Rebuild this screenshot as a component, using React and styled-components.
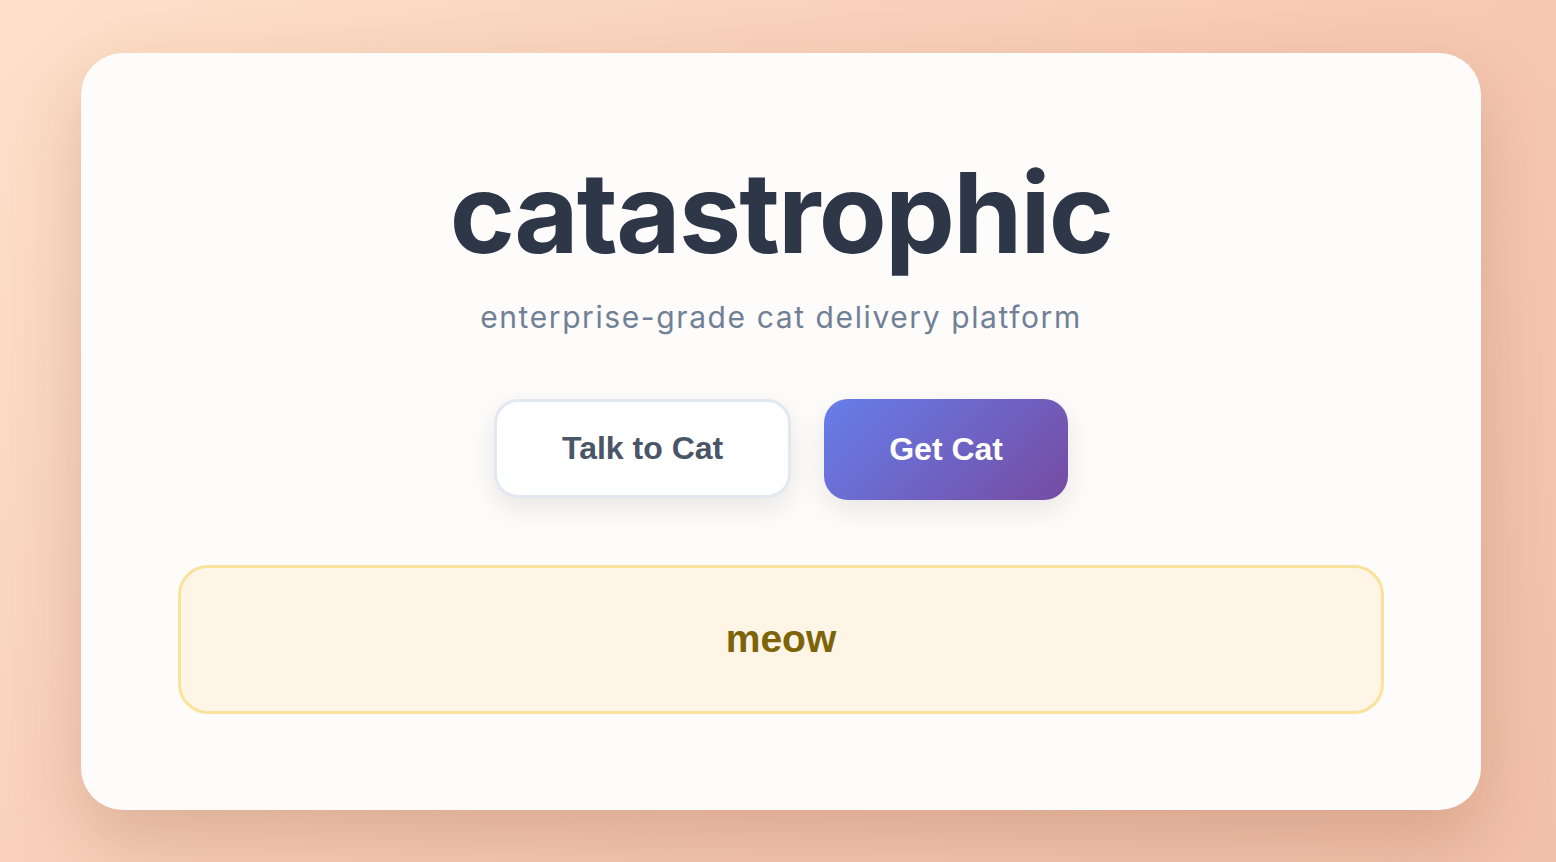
import React from 'react'
import styled, { createGlobalStyle } from 'styled-components'

const GlobalStyle = createGlobalStyle`
  html, body {
    margin: 0;
    height: 100%;
  }
  body {
    background: linear-gradient(135deg, #fee0ca 0%, #f7cab3 55%, #f3c0a9 100%);
    font-family: Inter, "Liberation Sans", sans-serif;
  }
  #root {
    height: 100%;
  }
`

const Page = styled.main`
  box-sizing: border-box;
  height: 100%;
  display: flex;
  align-items: center;
  padding: 0 75px 0 81px;
`

const Card = styled.section`
  box-sizing: border-box;
  width: 100%;
  height: 757px;
  padding: 96px 97px;
  border-radius: 42px;
  background: #fdfcfa;
  box-shadow: 0 30px 70px rgba(120, 60, 30, 0.22);
  display: flex;
  flex-direction: column;
  align-items: center;
`

const Title = styled.h1`
  margin: 8px 0 0;
  font-family: Inter, "Liberation Sans", sans-serif;
  font-weight: 700;
  font-size: 111px;
  line-height: 1;
  letter-spacing: -1.8px;
  color: #2d3748;
`

const Subtitle = styled.p`
  margin: 32px 0 0;
  font-family: Inter, "Liberation Sans", sans-serif;
  font-size: 30px;
  line-height: 35px;
  letter-spacing: 1.6px;
  color: #718096;
`

const Actions = styled.div`
  display: flex;
  align-items: flex-start;
  gap: 33px;
  margin-top: 64px;
`

const Button = styled.button`
  box-sizing: border-box;
  height: ${p => (p.primary ? '101px' : '99px')};
  padding: 0 65px;
  border-radius: 24px;
  font-family: "Liberation Sans", Arial, sans-serif;
  font-weight: 700;
  font-size: 32px;
  cursor: pointer;
  border: ${p => (p.primary ? 'none' : '3px solid #e2e8f0')};
  background: ${p => (p.primary ? 'linear-gradient(135deg, #667eea 0%, #764ba2 100%)' : '#ffffff')};
  color: ${p => (p.primary ? '#ffffff' : '#4a5568')};
  box-shadow: 0 10px 28px rgba(0, 0, 0, 0.09);
`

const Message = styled.div`
  box-sizing: border-box;
  align-self: stretch;
  height: 149px;
  margin-top: 65px;
  border: 3px solid #f9e39a;
  border-radius: 30px;
  background: #fef5e7;
  display: flex;
  align-items: center;
  justify-content: center;
  font-family: "Liberation Sans", Arial, sans-serif;
  font-weight: 700;
  font-size: 39px;
  color: #7d6408;
`

const App = () => (
  <>
    <GlobalStyle />
    <Page>
      <Card>
        <Title>catastrophic</Title>
        <Subtitle>enterprise-grade cat delivery platform</Subtitle>
        <Actions>
          <Button>Talk to Cat</Button>
          <Button primary>Get Cat</Button>
        </Actions>
        <Message>meow</Message>
      </Card>
    </Page>
  </>
)

export default App
